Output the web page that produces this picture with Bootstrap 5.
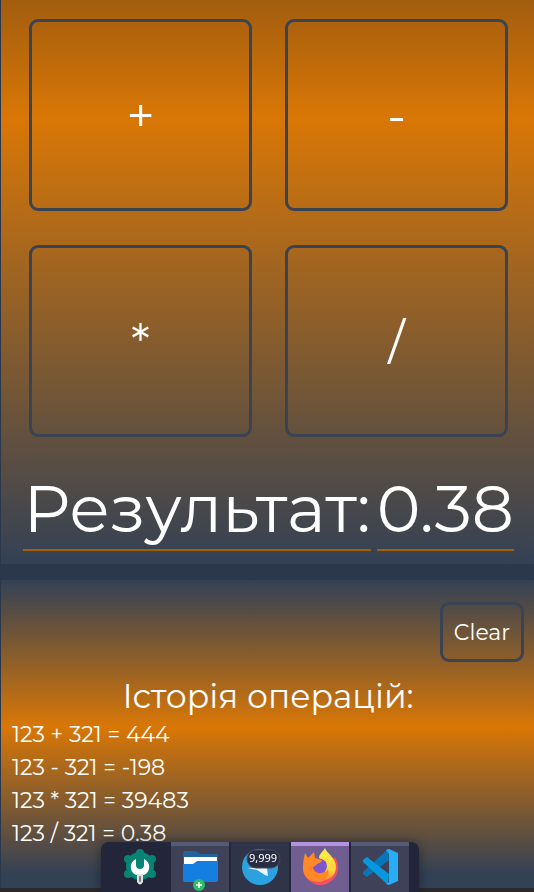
<!DOCTYPE html>
<html lang="uk">
<head>
<meta charset="utf-8">
<meta name="viewport" content="width=device-width, initial-scale=1">
<title>Калькулятор</title>
<link href="https://cdn.jsdelivr.net/npm/bootstrap@5.3.0/dist/css/bootstrap.min.css" rel="stylesheet">
<style>
body { background: #2b384b; color: #fff; font-family: Montserrat, Inter, "Open Sans", sans-serif; min-height: 100vh; overflow: hidden; }
.page { padding-left: 1px; gap: 16px; min-height: 100vh; }
.calc { background: linear-gradient(#a25d0f 0, #d97706 118px, #334155 100%); padding: 19px 21px 13px 23px; }
.ops { display: grid; grid-template-columns: 1fr 1fr; gap: 34px 33px; padding: 0 5px; }
.op { height: 192px; border: 3px solid #3a4354; border-radius: 9px; padding: 8px 12px 6px; font-size: 49px; line-height: 60px; font-weight: 400; color: #fff; }
.result { gap: 6px; margin-top: 32px; font-size: 66px; line-height: 80px; font-weight: 400; }
.result-part { border-bottom: 2px solid #a16207; white-space: nowrap; }
.history { background: linear-gradient(#334155 0, #d97706 147px, #334155 294px); padding: 22px 10px 0 11px; }
.clear-btn { height: 60px; width: 84px; border: 3px solid #3a4354; border-radius: 9px; font-size: 22px; color: #fff; padding: 0; }
.history-title { font-size: 33px; line-height: 40px; font-weight: 400; margin: 14px 0 2px; }
.entries { font-size: 22px; line-height: 33px; }
.dock { background: #23263a; width: 318px; height: 50px; border-radius: 8px 8px 0 0; gap: 2px; padding: 0 10px; box-shadow: 0 0 12px rgba(0,0,0,.4); left: 101px; bottom: 0; }
.dock-item { flex: 1; border: 0; border-top: 4px solid transparent; background: none; padding: 0; line-height: 0; }
.dock-item svg { overflow: visible; }
.open-app { background: #3e4157; border-top-color: #565b75; }
.dim-app { background: #303449; }
.active-app { background: #705e90; border-top-color: #b492e2; }
.edge { height: 4px; background: #29292e; bottom: 0; left: 0; }
</style>
<script src="https://cdn.jsdelivr.net/npm/bootstrap@5.3.0/dist/js/bootstrap.bundle.min.js"></script>
</head>
<body>
<main class="page d-flex flex-column">
  <section class="calc">
    <div class="ops">
      <button type="button" class="btn op">+</button>
      <button type="button" class="btn op">-</button>
      <button type="button" class="btn op">*</button>
      <button type="button" class="btn op">/</button>
    </div>
    <div class="result d-flex justify-content-center">
      <span class="result-part">Результат:</span>
      <span class="result-part">0.38</span>
    </div>
  </section>
  <section class="history flex-grow-1">
    <div class="d-flex justify-content-end">
      <button type="button" class="btn clear-btn">Clear</button>
    </div>
    <h2 class="history-title text-center">Історія операцій:</h2>
    <ul class="entries list-unstyled mb-0">
      <li>123 + 321 = 444</li>
      <li>123 - 321 = -198</li>
      <li>123 * 321 = 39483</li>
      <li>123 / 321 = 0.38</li>
    </ul>
  </section>
</main>
<div class="edge position-fixed w-100"></div>
<nav class="dock position-fixed d-flex" aria-label="Dock">
  <button type="button" class="dock-item" aria-label="Settings">
    <svg width="58" height="46" viewBox="0 0 58 46"><g fill="#078474"><circle cx="29" cy="20" r="14"/><circle cx="29" cy="7" r="4"/><circle cx="41" cy="13" r="4"/><circle cx="41" cy="28" r="4"/><circle cx="17" cy="28" r="4"/><circle cx="17" cy="13" r="4"/></g><path d="M25 13v6q0 4 4 4t4-4v-6c7 3 7 13 0 16h-8c-7-3-7-13 0-16z" fill="#fff"/><path d="M26 28h6v8q-3 5-6 0z" fill="#e2e2e2"/><path d="M29 31v4" stroke="#777" stroke-width="2" stroke-linecap="round"/></svg>
  </button>
  <button type="button" class="dock-item open-app" aria-label="Files">
    <svg width="58" height="46" viewBox="0 0 58 46"><path d="M12 7q0-2 2-2h11l4 3h16q2 0 2 2v10H12z" fill="#20639b"/><path d="M13 11h33v8H13z" fill="#fff"/><path d="M12 18h10l4-3h21v19q0 2-2 2H14q-2 0-2-2z" fill="#147fe0"/><circle cx="28" cy="39" r="6" fill="#2ebd68"/><path d="M28 36v6M25 39h6" stroke="#fff" stroke-width="1.6"/></svg>
  </button>
  <button type="button" class="dock-item dim-app" aria-label="Telegram">
    <svg width="58" height="46" viewBox="0 0 58 46"><circle cx="29" cy="21" r="18" fill="#2ba2df"/><path d="M16 22h20l1 8-3-1-8-5z" fill="#e8f5fc"/><rect x="16" y="4" width="33" height="18" rx="9" fill="#292d43" stroke="#454960"/><text x="32" y="16" text-anchor="middle" font-family="Noto Sans, sans-serif" font-size="11" fill="#fff">9,999</text></svg>
  </button>
  <button type="button" class="dock-item active-app" aria-label="Firefox">
    <svg width="58" height="46" viewBox="0 0 58 46"><defs><linearGradient id="flame" x1="0" y1="0" x2="0" y2="1"><stop offset="0" stop-color="#fff04a"/><stop offset=".7" stop-color="#ffd23c"/><stop offset="1" stop-color="#ff9832"/></linearGradient></defs><path d="M12 22c0 9 8 17 17 17s18-7 18-17c0-4-1-8-3-11L30 25z" fill="#f84e62"/><path d="M34 2c1 5 11 9 11 19 0 8-6 13-13 13l2-8 1-10-7-4c0-4 4-6 6-10z" fill="url(#flame)"/><circle cx="29" cy="20" r="7" fill="#7b56cf"/><path d="M14 7l3 5 6-6 1 6 7 2c0 3-4 3-6 5-1 2-3 1-3 3 2 7 11 7 15 1 2 8-3 13-9 13-9 0-16-5-16-14 0-6 1-11 2-15z" fill="#ff8827"/></svg>
  </button>
  <button type="button" class="dock-item open-app" aria-label="Code">
    <svg width="58" height="46" viewBox="0 0 58 46"><path d="M12 28v-2L37 3l1 11-22 17z" fill="#0875b7"/><path d="M12 14l4-3 22 17-1 11L12 16z" fill="#0797df"/><path d="M38 3l9 4v28l-9 4-3-1 3-2V8l-3-4z" fill="#28acf5"/></svg>
  </button>
</nav>
</body>
</html>
